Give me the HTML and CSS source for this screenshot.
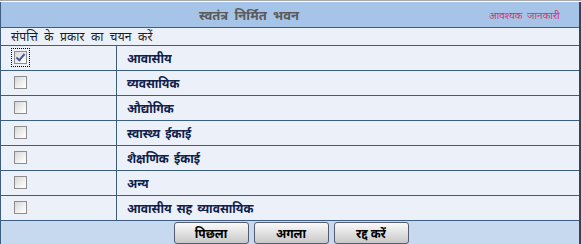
FILE: index.html
```html
<!DOCTYPE html>
<html lang="hi">
<head>
  <meta charset="UTF-8">
  <meta name="viewport" content="width=device-width, initial-scale=1.0">
  <title>स्वतंत्र निर्मित भवन</title>
  <link rel="stylesheet" href="styles.css">
</head>
<body>
  <div class="top-line"></div>
  <table class="form-table">
    <tr class="head-row">
      <td colspan="2">
        <div class="head">
          <span class="title">स्वतंत्र निर्मित भवन</span>
          <span class="required">आवश्यक जानकारी</span>
        </div>
      </td>
    </tr>
    <tr class="sub-row">
      <td colspan="2" class="sub-cell">संपत्ति के प्रकार का चयन करें</td>
    </tr>
    <tr>
      <td class="check-cell"><span class="chk-wrap focus"><input type="checkbox" class="chk" checked></span></td>
      <td class="label-cell">आवासीय</td>
    </tr>
    <tr>
      <td class="check-cell"><span class="chk-wrap"><input type="checkbox" class="chk"></span></td>
      <td class="label-cell">व्यवसायिक</td>
    </tr>
    <tr>
      <td class="check-cell"><span class="chk-wrap"><input type="checkbox" class="chk"></span></td>
      <td class="label-cell">औद्योगिक</td>
    </tr>
    <tr>
      <td class="check-cell"><span class="chk-wrap"><input type="checkbox" class="chk"></span></td>
      <td class="label-cell">स्वास्थ्य ईकाई</td>
    </tr>
    <tr>
      <td class="check-cell"><span class="chk-wrap"><input type="checkbox" class="chk"></span></td>
      <td class="label-cell">शैक्षणिक ईकाई</td>
    </tr>
    <tr>
      <td class="check-cell"><span class="chk-wrap"><input type="checkbox" class="chk"></span></td>
      <td class="label-cell">अन्य</td>
    </tr>
    <tr>
      <td class="check-cell"><span class="chk-wrap"><input type="checkbox" class="chk"></span></td>
      <td class="label-cell">आवासीय सह व्यावसायिक</td>
    </tr>
    <tr class="foot-row">
      <td colspan="2">
        <div class="buttons">
          <button class="btn">पिछला</button>
          <button class="btn">अगला</button>
          <button class="btn">रद्द करें</button>
        </div>
      </td>
    </tr>
  </table>
</body>
</html>
```

FILE: styles.css
```css
body {
  margin: 0;
  font-family: Tahoma, "Noto Sans", "DejaVu Sans", sans-serif;
  font-size: 12px;
  background: #fff;
}

.top-line {
  height: 1px;
  background: #a7a7a7;
  border-bottom: 1px solid #fff;
}

.form-table {
  width: 581px;
  border-collapse: collapse;
  border-left: 1px solid #3d5e80;
  border-right: 2px solid #2c4660;
}

.form-table td {
  padding: 0;
  border-bottom: 1px solid #3d5e80;
  background: #ecf1f9;
  color: #10204a;
}

.form-table .head-row td {
  height: 25px;
  background: #a6c4e7;
}

.head {
  display: flex;
  align-items: center;
  height: 25px;
}

.title {
  flex: 1;
  text-align: center;
  font-size: 13px;
  font-weight: bold;
  word-spacing: 3px;
  color: #5a5a5a;
  padding-left: 8px;
}

.required {
  width: 90px;
  font-size: 10px;
  word-spacing: 2px;
  color: #d2306e;
}

.form-table .sub-cell {
  height: 17px;
  padding-left: 10px;
  font-size: 12px;
  word-spacing: 3px;
  letter-spacing: 0.2px;
  color: #1a1a2a;
}

.form-table .check-cell {
  width: 115px;
  height: 24px;
  border-right: 1px solid #3d5e80;
}

.chk-wrap {
  display: inline-flex;
  margin-left: 10px;
  padding: 2px;
  border: 1px dotted transparent;
}

.chk-wrap.focus {
  border-color: #000;
}

.chk {
  appearance: none;
  margin: 0;
  width: 13px;
  height: 13px;
  border: 1px solid #8d8d8d;
  background: linear-gradient(135deg, #d6d6d6, #f6f6f6 70%, #ffffff);
  position: relative;
}

.chk:checked::after {
  content: "";
  position: absolute;
  left: 3px;
  top: 0px;
  width: 3px;
  height: 7px;
  border: solid #4a5a9a;
  border-width: 0 2px 2px 0;
  transform: rotate(40deg);
}

.form-table .label-cell {
  padding-left: 10px;
  font-size: 12px;
  font-weight: bold;
  word-spacing: 2px;
}

.form-table .foot-row td {
  height: 23px;
  background: #c6d9ef;
  border-bottom: none;
}

.buttons {
  display: flex;
  justify-content: center;
  gap: 5px;
  padding-top: 1px;
  padding-left: 2px;
}

.btn {
  width: 75px;
  height: 22px;
  padding: 0;
  font-family: inherit;
  font-size: 12px;
  font-weight: bold;
  color: #000;
  border: 1px solid #555b70;
  border-radius: 3px;
  background: linear-gradient(#fafafa, #dcdcdc 60%, #c8c8c8);
}
```
